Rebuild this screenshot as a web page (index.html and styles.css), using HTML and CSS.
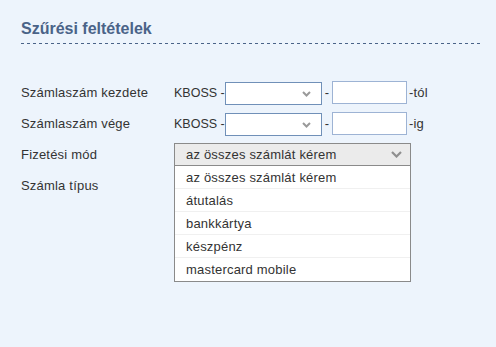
FILE: index.html
```html
<!DOCTYPE html>
<html lang="hu">
<head>
<meta charset="utf-8">
<title>Szűrési feltételek</title>
<link rel="stylesheet" href="styles.css">
</head>
<body>
<div class="panel">
  <h2 class="title">Szűrési feltételek</h2>
  <div class="form">
    <div class="row">
      <div class="label">Számlaszám kezdete</div>
      <div class="field">
        <span class="prefix">KBOSS -</span>
        <div class="sel"><svg class="chev" width="9" height="6" viewBox="0 0 9 6"><path d="M1 1 L4.5 4.5 L8 1" fill="none" stroke="#9a9a9a" stroke-width="2"/></svg></div>
        <span class="dash">-</span>
        <div class="inp"></div>
        <span class="suffix">-tól</span>
      </div>
    </div>
    <div class="row">
      <div class="label">Számlaszám vége</div>
      <div class="field">
        <span class="prefix">KBOSS -</span>
        <div class="sel"><svg class="chev" width="9" height="6" viewBox="0 0 9 6"><path d="M1 1 L4.5 4.5 L8 1" fill="none" stroke="#9a9a9a" stroke-width="2"/></svg></div>
        <span class="dash">-</span>
        <div class="inp"></div>
        <span class="suffix">-ig</span>
      </div>
    </div>
    <div class="row">
      <div class="label">Fizetési mód</div>
      <div class="field">
        <div class="combo">
          <div class="combo-head">
            <span>az összes számlát kérem</span>
            <svg class="chev" width="11" height="7" viewBox="0 0 11 7"><path d="M1 1 L5.5 5.5 L10 1" fill="none" stroke="#8f8f8f" stroke-width="2.2"/></svg>
          </div>
          <ul class="options">
            <li>az összes számlát kérem</li>
            <li>átutalás</li>
            <li>bankkártya</li>
            <li>készpénz</li>
            <li>mastercard mobile</li>
          </ul>
        </div>
      </div>
    </div>
    <div class="row">
      <div class="label">Számla típus</div>
    </div>
  </div>
</div>
</body>
</html>
```
FILE: styles.css
```css
html, body {
  margin: 0;
  padding: 0;
  background: #edf4fc;
}
body {
  font-family: "Liberation Sans", Arial, sans-serif;
  font-size: 13px;
  color: #333;
  width: 496px;
  height: 347px;
  overflow: hidden;
}
.panel {
  padding: 19px 14px 0 21px;
}
.title {
  margin: 0;
  font-size: 16px;
  font-weight: bold;
  color: #4a6388;
  line-height: 20px;
  padding-bottom: 5px;
  background-image: repeating-linear-gradient(to right, #4a6388 0 3px, transparent 3px 6px);
  background-size: 100% 1px;
  background-repeat: no-repeat;
  background-position: left bottom;
  height: 20px;
}
.form {
  margin-top: 33px;
  display: flex;
  flex-direction: column;
  letter-spacing: 0.2px;
}
.row {
  display: flex;
  align-items: center;
  height: 31px;
}
.label {
  width: 153px;
  flex: none;
  color: #333;
}
.field {
  display: flex;
  align-items: center;
}
.prefix {
  flex: none;
  white-space: nowrap;
  width: 51px;
  font-size: 12.5px;
  letter-spacing: 0;
  color: #333;
}
.sel {
  box-sizing: border-box;
  width: 97px;
  height: 23px;
  border: 1px solid #7090b8;
  background: #fff;
  margin-top: 2px;
  display: flex;
  align-items: center;
  justify-content: flex-end;
  padding-right: 10px;
}
.dash {
  width: 10px;
  text-align: center;
}
.inp {
  box-sizing: border-box;
  width: 75px;
  height: 23px;
  border: 1px solid #9db3d4;
  background: #fff;
  margin-top: -1px;
}
.suffix {
  margin-left: 2px;
}
.combo {
  position: relative;
  width: 237px;
}
.combo-head {
  box-sizing: border-box;
  height: 23px;
  border: 1px solid #8a8a8a;
  background: #ebebeb;
  display: flex;
  align-items: center;
  justify-content: space-between;
  padding: 0 8px 0 11px;
}
.options {
  position: absolute;
  left: 0;
  top: 23px;
  width: 237px;
  box-sizing: border-box;
  margin: 0;
  padding: 0;
  list-style: none;
  background: #fff;
  border: 1px solid #8a8a8a;
  border-top: 0;
  z-index: 2;
}
.options li {
  height: 23px;
  line-height: 24px;
  padding-left: 11px;
  border-bottom: 1px solid #f0f0f0;
  box-sizing: border-box;
}
.options li:last-child {
  border-bottom: 0;
}
```
